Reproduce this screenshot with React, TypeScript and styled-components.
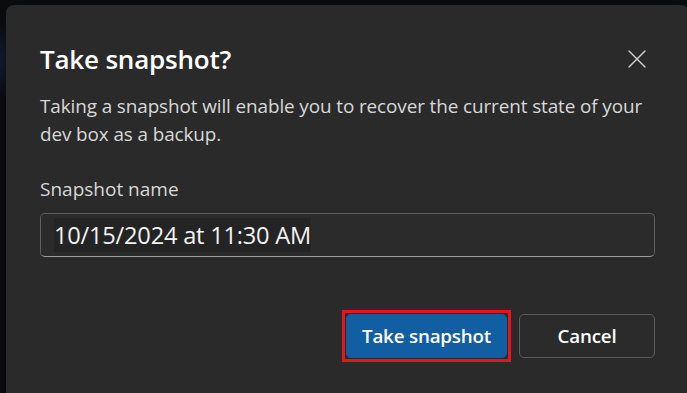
import React from 'react';
import styled, { createGlobalStyle } from 'styled-components';

const GlobalStyle = createGlobalStyle`
  html, body {
    margin: 0;
    padding: 0;
    background: #0c0d10;
  }
  * {
    box-sizing: border-box;
  }
`;

const Backdrop = styled.div`
  width: 687px;
  height: 393px;
  overflow: hidden;
  padding: 5px 0 0 6px;
  background:
    radial-gradient(circle at 0 60px, rgba(30, 50, 90, 0.55) 0, rgba(12, 13, 16, 0) 40px),
    #0c0d10;
  font-family: 'Segoe UI', 'Open Sans', 'Noto Sans', sans-serif;
`;

const Dialog = styled.div`
  width: 683px;
  min-height: 400px;
  background: #2a2a2a;
  border-radius: 8px;
  padding: 36px 34px 0 34px;
  display: flex;
  flex-direction: column;
  box-shadow: 0 8px 24px rgba(0, 0, 0, 0.6);
`;

const Header = styled.div`
  display: flex;
  align-items: center;
  justify-content: space-between;
`;

const Title = styled.h2`
  margin: 0;
  font-size: 26px;
  line-height: 36px;
  font-weight: 600;
  color: #ffffff;
  letter-spacing: -0.2px;
`;

const CloseButton = styled.button`
  width: 32px;
  height: 32px;
  margin-right: 2px;
  border: none;
  background: transparent;
  padding: 0;
  display: flex;
  align-items: center;
  justify-content: center;
  color: #d4d4d4;
  cursor: pointer;
`;

const Body = styled.p`
  margin: 15px -6px 0 0;
  font-size: 18.9px;
  line-height: 28px;
  letter-spacing: -0.1px;
  color: #d8d8d8;
`;

const Label = styled.label`
  display: block;
  margin-top: 27px;
  font-size: 19px;
  line-height: 28px;
  color: #d8d8d8;
`;

const Field = styled.div`
  margin-top: 10px;
  height: 44px;
  border: 1px solid #5e5e5e;
  border-bottom-color: #9c9c9c;
  border-radius: 5px;
  background: #2b2b2b;
  display: flex;
  align-items: center;
  padding: 0 13px;
`;

const Value = styled.span`
  font-size: 23.6px;
  line-height: 34px;
  color: #f2f2f2;
  background: #242424;
  letter-spacing: -0.2px;
`;

const Actions = styled.div`
  margin-top: 57px;
  display: flex;
  justify-content: flex-end;
  align-items: center;
  gap: 12px;
`;

const HighlightFrame = styled.span`
  display: inline-flex;
  margin: -4px;
  padding: 1px;
  border: 3px solid #e8131c;
`;

const Button = styled.button<{ $primary?: boolean; $width: number }>`
  width: ${(p) => p.$width}px;
  height: 44px;
  border-radius: 5px;
  font-family: inherit;
  font-size: 18.8px;
  font-weight: 600;
  letter-spacing: -0.2px;
  color: #ffffff;
  cursor: pointer;
  background: ${(p) => (p.$primary ? '#115ea3' : '#2b2b2b')};
  border: 1px solid ${(p) => (p.$primary ? '#115ea3' : '#5c5c5c')};
`;

const CloseIcon = () => (
  <svg width="18" height="18" viewBox="0 0 18 18" fill="none">
    <path d="M1 1L17 17M17 1L1 17" stroke="currentColor" strokeWidth="1.4" strokeLinecap="round" />
  </svg>
);

export default function App() {
  return (
    <>
      <GlobalStyle />
      <Backdrop>
        <Dialog>
          <Header>
            <Title>Take snapshot?</Title>
            <CloseButton aria-label="Close">
              <CloseIcon />
            </CloseButton>
          </Header>
          <Body>
            Taking a snapshot will enable you to recover the current state of your dev box as a backup.
          </Body>
          <Label>Snapshot name</Label>
          <Field>
            <Value>10/15/2024 at 11:30 AM</Value>
          </Field>
          <Actions>
            <HighlightFrame>
              <Button $primary $width={161}>Take snapshot</Button>
            </HighlightFrame>
            <Button $width={136}>Cancel</Button>
          </Actions>
        </Dialog>
      </Backdrop>
    </>
  );
}
